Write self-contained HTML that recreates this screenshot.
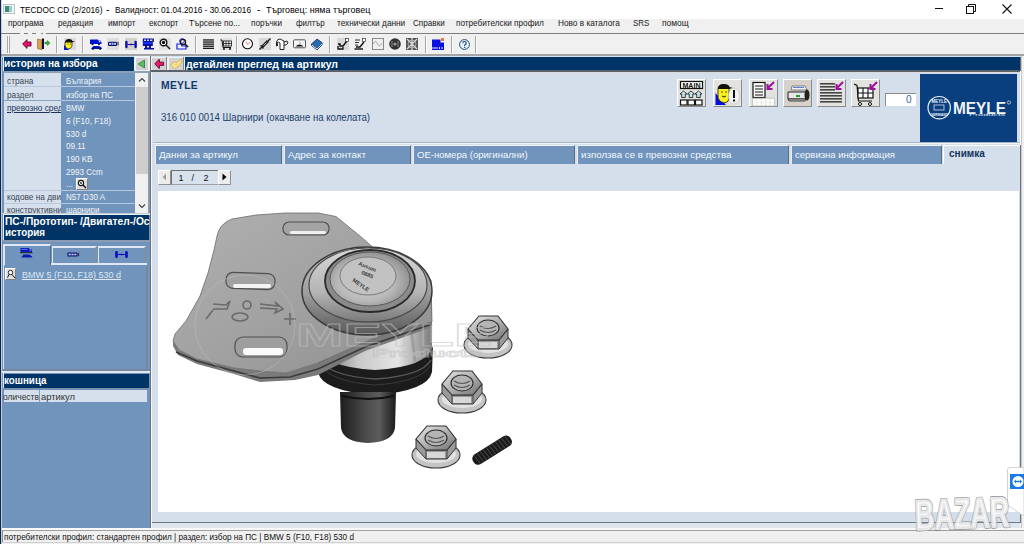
<!DOCTYPE html>
<html><head><meta charset="utf-8"><style>
html,body{margin:0;padding:0;width:1024px;height:544px;overflow:hidden;background:#f0f0f0;}
body{position:relative;font-family:"Liberation Sans", sans-serif;}
.a{position:absolute;}
.t{position:absolute;white-space:pre;transform-origin:0 0;}
</style></head><body>
<div class="a" style="left:0px;top:0px;width:1024px;height:19px;background:#fff"></div><div class="a" style="left:0px;top:19px;width:1024px;height:14px;background:#f0f0f0"></div><div class="a" style="left:0px;top:32.5px;width:20px;height:1.5px;background:#808080"></div><div class="a" style="left:24px;top:32.5px;width:4px;height:1.5px;background:#808080"></div><div class="a" style="left:32px;top:32.5px;width:4px;height:1.5px;background:#808080"></div><div class="a" style="left:41px;top:32.5px;width:2px;height:1.5px;background:#808080"></div><div class="a" style="left:46px;top:32.5px;width:978px;height:1.5px;background:#808080"></div><div class="a" style="left:0px;top:34px;width:1024px;height:20px;background:#f0f0f0"></div><div class="a" style="left:0px;top:54px;width:1024px;height:1.5px;background:#a4a4a4"></div><div class="a" style="left:0px;top:55.5px;width:1024px;height:1.5px;background:#d4e6f4"></div><div class="a" style="left:0px;top:0px;width:1px;height:544px;background:#0a2550"></div><div class="a" style="left:1px;top:0px;width:1px;height:544px;background:#7a8aa8;opacity:0.35"></div><div class="a" style="left:935px;top:8px;width:8px;height:1px;background:#111"></div><div class="a" style="left:2px;top:56px;width:148px;height:472px;background:#7094bc"></div><div class="a" style="left:2px;top:56px;width:148px;height:1px;background:#c8d8e8"></div><div class="a" style="left:3px;top:57px;width:1px;height:14px;background:#e8eef4"></div><div class="a" style="left:4px;top:57px;width:130px;height:14px;background:#003366"></div><div class="a" style="left:3px;top:71px;width:147px;height:2px;background:#8ca0b8"></div><div class="a" style="left:134px;top:56px;width:16px;height:15px;background:#eef2f6"></div><div class="a" style="left:136px;top:58px;width:12px;height:12px;background:#d2d2d2"></div><div class="a" style="left:150px;top:56px;width:1px;height:472px;background:#707070"></div><div class="a" style="left:151px;top:57px;width:873px;height:13px;background:#eef0f2"></div><div class="a" style="left:151px;top:70px;width:869px;height:1.5px;background:#5a626c"></div><div class="a" style="left:151px;top:71.5px;width:869px;height:1.5px;background:#d8dce0"></div><div class="a" style="left:151px;top:72px;width:1px;height:456px;background:#f4f6f8"></div><div class="a" style="left:152px;top:58px;width:14px;height:12px;background:#d2d2d2"></div><div class="a" style="left:166px;top:57px;width:1px;height:14px;background:#8a8a8a"></div><div class="a" style="left:169px;top:58px;width:14px;height:12px;background:#d2d2d2"></div><div class="a" style="left:183px;top:57px;width:1px;height:14px;background:#8a8a8a"></div><div class="a" style="left:185px;top:57px;width:835px;height:13px;background:#003366"></div><div class="a" style="left:152px;top:73px;width:868px;height:449px;background:#d4dfeb"></div><div class="a" style="left:1017px;top:72px;width:3px;height:73px;background:#d4dfeb"></div><div class="a" style="left:1020px;top:71px;width:1px;height:74px;background:#fafafa"></div><div class="a" style="left:1021px;top:56px;width:1px;height:472px;background:#c8c8c8"></div><div class="a" style="left:1022px;top:56px;width:2px;height:472px;background:#f0f0f0"></div><div class="a" style="left:1020px;top:145px;width:1px;height:378px;background:#6c7480"></div><div class="a" style="left:1020px;top:57px;width:1px;height:14px;background:#6a6a6a"></div><div class="a" style="left:153px;top:142px;width:867px;height:1px;background:#a8b4c0"></div><div class="a" style="left:153px;top:143px;width:867px;height:1px;background:#f0f4f8"></div><div class="a" style="left:920px;top:74px;width:97px;height:68px;background:#0a3f7f"></div><div class="a" style="left:677px;top:79px;width:29px;height:28px;background:#e2e2de;border-top:1px solid #fff;border-left:1px solid #fff;border-right:1px solid #8c8c8c;border-bottom:1px solid #8c8c8c;box-sizing:border-box"></div><div class="a" style="left:713px;top:79px;width:29px;height:28px;background:#e2e2de;border-top:1px solid #fff;border-left:1px solid #fff;border-right:1px solid #8c8c8c;border-bottom:1px solid #8c8c8c;box-sizing:border-box"></div><div class="a" style="left:749px;top:79px;width:29px;height:28px;background:#e2e2de;border-top:1px solid #fff;border-left:1px solid #fff;border-right:1px solid #8c8c8c;border-bottom:1px solid #8c8c8c;box-sizing:border-box"></div><div class="a" style="left:783px;top:79px;width:29px;height:28px;background:#d6d2ca;border-top:1px solid #fff;border-left:1px solid #fff;border-right:1px solid #8c8c8c;border-bottom:1px solid #8c8c8c;box-sizing:border-box"></div><div class="a" style="left:817px;top:79px;width:29px;height:28px;background:#e2e2de;border-top:1px solid #fff;border-left:1px solid #fff;border-right:1px solid #8c8c8c;border-bottom:1px solid #8c8c8c;box-sizing:border-box"></div><div class="a" style="left:851px;top:79px;width:29px;height:28px;background:#e2e2de;border-top:1px solid #fff;border-left:1px solid #fff;border-right:1px solid #8c8c8c;border-bottom:1px solid #8c8c8c;box-sizing:border-box"></div><div class="a" style="left:885px;top:93px;width:31px;height:13px;background:#fff;border-top:1px solid #8c8c8c;border-left:1px solid #8c8c8c;box-sizing:border-box"></div><div class="a" style="left:155px;top:145px;width:127px;height:19px;background:#7094bc;border-top:1.5px solid #f0f4f8;border-left:1px solid #e8eef4;border-right:1px solid #5c6c80;box-sizing:border-box"></div><div class="a" style="left:284px;top:145px;width:127px;height:19px;background:#7094bc;border-top:1.5px solid #f0f4f8;border-left:1px solid #e8eef4;border-right:1px solid #5c6c80;box-sizing:border-box"></div><div class="a" style="left:413px;top:145px;width:162px;height:19px;background:#7094bc;border-top:1.5px solid #f0f4f8;border-left:1px solid #e8eef4;border-right:1px solid #5c6c80;box-sizing:border-box"></div><div class="a" style="left:577px;top:145px;width:212px;height:19px;background:#7094bc;border-top:1.5px solid #f0f4f8;border-left:1px solid #e8eef4;border-right:1px solid #5c6c80;box-sizing:border-box"></div><div class="a" style="left:791px;top:145px;width:151px;height:19px;background:#7094bc;border-top:1.5px solid #f0f4f8;border-left:1px solid #e8eef4;border-right:1px solid #5c6c80;box-sizing:border-box"></div><div class="a" style="left:943px;top:145px;width:77px;height:19px;background:#d4dfeb;border-top:1px solid #fff;border-left:1px solid #fff;box-sizing:border-box"></div><div class="a" style="left:158px;top:170px;width:13px;height:15px;background:#ececec;border-top:1px solid #fff;border-left:1px solid #fff;border-right:1px solid #909090;border-bottom:1px solid #909090;box-sizing:border-box"></div><div class="a" style="left:171px;top:170px;width:47px;height:15px;background:#d8e2ec;border-top:1px solid #707070;border-left:1px solid #707070;border-bottom:1px solid #a0a0a0;box-sizing:border-box"></div><div class="a" style="left:218px;top:170px;width:13px;height:15px;background:#ececec;border-top:1px solid #fff;border-left:1px solid #fff;border-right:1px solid #909090;border-bottom:1px solid #909090;box-sizing:border-box"></div><div class="a" style="left:158px;top:191px;width:861px;height:321px;background:#fff"></div><div class="a" style="left:152px;top:522px;width:868px;height:1px;background:#707a86"></div><div class="a" style="left:152px;top:523px;width:868px;height:5px;background:#e0e6ee"></div><div class="a" style="left:2px;top:528px;width:1022px;height:2px;background:#f8f8f8"></div><div class="a" style="left:2px;top:530px;width:1022px;height:1px;background:#a0a0a0"></div><div class="a" style="left:2px;top:531px;width:1022px;height:13px;background:#f0f0f0"></div><div class="a" style="left:2px;top:531px;width:1px;height:11px;background:#8a8a8a"></div><div class="a" style="left:2px;top:542px;width:1022px;height:1px;background:#d0d0d0"></div><div class="a" style="left:4px;top:73px;width:57px;height:13px;background:#d5e0ec"></div><div class="a" style="left:62px;top:73px;width:73px;height:13px;background:#7094bc"></div><div class="a" style="left:4px;top:87px;width:57px;height:13px;background:#d5e0ec"></div><div class="a" style="left:62px;top:87px;width:73px;height:13px;background:#7094bc"></div><div class="a" style="left:4px;top:101px;width:57px;height:89px;background:#d5e0ec"></div><div class="a" style="left:62px;top:101px;width:73px;height:89px;background:#7094bc"></div><div class="a" style="left:4px;top:191px;width:57px;height:12px;background:#d5e0ec"></div><div class="a" style="left:62px;top:191px;width:73px;height:12px;background:#7094bc"></div><div class="a" style="left:4px;top:204px;width:57px;height:9px;background:#d5e0ec"></div><div class="a" style="left:62px;top:204px;width:73px;height:9px;background:#7094bc"></div><div class="a" style="left:4px;top:86px;width:131px;height:1px;background:#b8c8dc"></div><div class="a" style="left:4px;top:100px;width:131px;height:1px;background:#b8c8dc"></div><div class="a" style="left:4px;top:190px;width:131px;height:1px;background:#b8c8dc"></div><div class="a" style="left:4px;top:203px;width:131px;height:1px;background:#b8c8dc"></div><div class="a" style="left:4px;top:100px;width:57px;height:1px;background:#8ca4c0"></div><div class="a" style="left:76px;top:178px;width:12px;height:12px;background:#dcdcdc;border-top:1px solid #fff;border-left:1px solid #fff;border-right:1px solid #808080;border-bottom:1px solid #808080;box-sizing:border-box"></div><div class="a" style="left:135px;top:73px;width:1px;height:140px;background:#f0f0f0"></div><div class="a" style="left:136px;top:73px;width:12px;height:140px;background:#f0f0f0"></div><div class="a" style="left:136px;top:87px;width:12px;height:87px;background:#cdcdcd"></div><div class="a" style="left:148px;top:73px;width:2px;height:141px;background:#8a9ab0"></div><div class="a" style="left:2px;top:213px;width:148px;height:1px;background:#c0ccd8"></div><div class="a" style="left:3px;top:214px;width:147px;height:1px;background:#e8eef4"></div><div class="a" style="left:4px;top:215px;width:145px;height:25px;background:#003366"></div><div class="a" style="left:3px;top:215px;width:1px;height:25px;background:#e8eef4"></div><div class="a" style="left:3px;top:240px;width:147px;height:2px;background:#8a9ab0"></div><div class="a" style="left:3px;top:244px;width:48px;height:21px;background:#7094bc;border-top:2px solid #dfe8f2;border-left:2px solid #dfe8f2;border-right:1px solid #5a6a80;box-sizing:border-box"></div><div class="a" style="left:52px;top:246px;width:45px;height:18px;background:#7094bc;border-top:2px solid #dfe8f2;border-left:1px solid #dfe8f2;border-right:2px solid #8090a4;box-sizing:border-box"></div><div class="a" style="left:98px;top:246px;width:48px;height:18px;background:#7094bc;border-top:2px solid #dfe8f2;border-left:1px solid #dfe8f2;border-right:2px solid #8090a4;box-sizing:border-box"></div><div class="a" style="left:51px;top:263px;width:96px;height:2px;background:#dfe8f2"></div><div class="a" style="left:3px;top:265px;width:1px;height:105px;background:#dfe8f2"></div><div class="a" style="left:146px;top:265px;width:2px;height:105px;background:#7888a0"></div><div class="a" style="left:3px;top:369px;width:145px;height:2px;background:#7888a0"></div><div class="a" style="left:5px;top:268px;width:11px;height:12px;background:#e0e0e0;border-top:1px solid #fff;border-left:1px solid #fff;border-right:1px solid #808080;border-bottom:1px solid #808080;box-sizing:border-box"></div><div class="a" style="left:2px;top:371px;width:148px;height:2px;background:#dfe8f2"></div><div class="a" style="left:3px;top:373px;width:1px;height:15px;background:#e8eef4"></div><div class="a" style="left:4px;top:374px;width:145px;height:14px;background:#003366"></div><div class="a" style="left:3px;top:388px;width:147px;height:1px;background:#8090a4"></div><div class="a" style="left:4px;top:390px;width:35px;height:12px;background:#d5e0ec"></div><div class="a" style="left:40px;top:390px;width:107px;height:12px;background:#d5e0ec"></div><div class="a" style="left:39px;top:390px;width:1px;height:12px;background:#8c9cb0"></div><div class="a" style="left:7px;top:36px;width:1px;height:17px;background:#a8a8a8"></div><div class="a" style="left:8px;top:36px;width:1px;height:17px;background:#fafafa"></div><div class="a" style="left:9px;top:36px;width:1px;height:17px;background:#a8a8a8"></div><div class="a" style="left:56px;top:36px;width:1px;height:17px;background:#a6a6a6"></div><div class="a" style="left:57px;top:36px;width:1px;height:17px;background:#fcfcfc"></div><div class="a" style="left:82px;top:36px;width:1px;height:17px;background:#a6a6a6"></div><div class="a" style="left:83px;top:36px;width:1px;height:17px;background:#fcfcfc"></div><div class="a" style="left:195px;top:36px;width:1px;height:17px;background:#a6a6a6"></div><div class="a" style="left:196px;top:36px;width:1px;height:17px;background:#fcfcfc"></div><div class="a" style="left:236px;top:36px;width:1px;height:17px;background:#a6a6a6"></div><div class="a" style="left:237px;top:36px;width:1px;height:17px;background:#fcfcfc"></div><div class="a" style="left:329px;top:36px;width:1px;height:17px;background:#a6a6a6"></div><div class="a" style="left:330px;top:36px;width:1px;height:17px;background:#fcfcfc"></div><div class="a" style="left:425px;top:36px;width:1px;height:17px;background:#a6a6a6"></div><div class="a" style="left:426px;top:36px;width:1px;height:17px;background:#fcfcfc"></div><div class="a" style="left:451px;top:36px;width:1px;height:17px;background:#a6a6a6"></div><div class="a" style="left:452px;top:36px;width:1px;height:17px;background:#fcfcfc"></div><div class="a" style="left:475px;top:36px;width:1px;height:17px;background:#a6a6a6"></div><div class="a" style="left:476px;top:36px;width:1px;height:17px;background:#fcfcfc"></div><div class="a" style="left:64px;top:38px;width:12px;height:12px;background:#dcdcdc"></div><div class="a" style="left:107px;top:38px;width:12px;height:12px;background:#dedede"></div><div class="a" style="left:125px;top:38px;width:12px;height:12px;background:#d6d2ca"></div><div class="a" style="left:159px;top:38px;width:12px;height:12px;background:#e0e0e0"></div><div class="a" style="left:220px;top:38px;width:12px;height:12px;background:#e0e0e0"></div><div class="a" style="left:259px;top:38px;width:12px;height:12px;background:#d8d8d8"></div><div class="a" style="left:337px;top:38px;width:12px;height:12px;background:#d8d8d8"></div>
<svg class="a" style="left:3px;top:4px" width="12" height="10" viewBox="0 0 12 10"><rect x="0.5" y="0.5" width="11" height="9" fill="#f4f4f4" stroke="#b8c4c8"/><rect x="2" y="2" width="4" height="6" fill="#3a8a78"/><rect x="6" y="2" width="3" height="6" fill="#9cc"/></svg><svg class="a" style="left:966px;top:4px" width="11" height="10" viewBox="0 0 11 10"><rect x="0.5" y="2.5" width="7" height="7" fill="none" stroke="#111"/><path d="M2.5 2.5V0.5H9.5V7.5H7.5" fill="none" stroke="#111"/></svg><svg class="a" style="left:1002px;top:4px" width="10" height="10" viewBox="0 0 10 10"><path d="M0.5 0.5L9.5 9.5M9.5 0.5L0.5 9.5" stroke="#111" stroke-width="1.1"/></svg><svg class="a" style="left:137px;top:59px" width="10" height="10" viewBox="0 0 10 10"><path d="M7.5 1L1.2 5L7.5 9Z" fill="#5cc060" stroke="#2a7a3a" stroke-width="0.8" stroke-linejoin="round"/></svg><svg class="a" style="left:154px;top:58px" width="11" height="12" viewBox="0 0 11 12"><path d="M0.8 5.8 L5.2 1.2 L5.6 4.2 L9.6 4.2 L9.6 7.4 L5.6 7.4 L5.2 10.6 Z" fill="#ee1870" stroke="#5a0628" stroke-width="0.9" stroke-linejoin="round"/></svg><svg class="a" style="left:170px;top:58px" width="13" height="12" viewBox="0 0 13 12"><path d="M0.8 6.5 L4 4 L7.4 4.2 L10 2 L11.8 0.8 L11.6 4 L9.5 7.5 L6.5 10 L4.7 10.9 L2.8 9 Z" fill="#f8e48a" stroke="#c8a850" stroke-width="0.7" stroke-linejoin="round"/><path d="M4.5 6.5 L7.5 6 M5.5 8.5 L8 7.8" stroke="#e0c060" stroke-width="0.6"/></svg><svg class="a" style="left:925px;top:93px" width="90" height="30" viewBox="0 0 90 30"><circle cx="14.2" cy="14.7" r="11.2" fill="none" stroke="#e8eef6" stroke-width="1.2"/><rect x="9" y="12" width="10" height="5" fill="none" stroke="#dde" stroke-width="0.8"/><text x="14.2" y="9.5" font-size="4.5" font-weight="700" fill="#e8eef6" text-anchor="middle" font-family="Liberation Sans">MEYLE</text><text x="14.2" y="23" font-size="3.5" font-weight="700" fill="#e8eef6" text-anchor="middle" font-family="Liberation Sans">GERMANY</text><text x="28" y="21" font-size="17" font-weight="700" fill="#f0f4fa" font-family="Liberation Sans" textLength="53" lengthAdjust="spacingAndGlyphs">MEYLE</text><text x="44" y="23" font-size="4" fill="#e0e8f0" font-family="Liberation Sans" textLength="36" lengthAdjust="spacingAndGlyphs">Products</text><circle cx="84" cy="9.5" r="1.6" fill="none" stroke="#fff" stroke-width="0.6"/></svg><svg class="a" style="left:161px;top:172px" width="7" height="10" viewBox="0 0 7 10"><path d="M5 1.5L1.5 5L5 8.5Z" fill="#a0a0a0"/></svg><svg class="a" style="left:221px;top:172px" width="7" height="10" viewBox="0 0 7 10"><path d="M1.5 1.5L5.5 5L1.5 8.5Z" fill="#000"/></svg><svg class="a" style="left:77px;top:179px" width="10" height="10" viewBox="0 0 10 10"><circle cx="4" cy="4" r="2.6" fill="#fff" stroke="#111" stroke-width="1.1"/><path d="M6 6L9 9" stroke="#111" stroke-width="1.4"/><path d="M3 4H5M4 3V5" stroke="#111" stroke-width="0.8"/></svg><svg class="a" style="left:137px;top:76px" width="10" height="8" viewBox="0 0 10 8"><path d="M2 5.5L5 2.5L8 5.5" fill="none" stroke="#404040" stroke-width="1.1"/></svg><svg class="a" style="left:137px;top:202px" width="10" height="8" viewBox="0 0 10 8"><path d="M2 2.5L5 5.5L8 2.5" fill="none" stroke="#404040" stroke-width="1.1"/></svg><svg class="a" style="left:20px;top:248px" width="13" height="10" viewBox="0 0 13 10"><rect x="0.5" y="0" width="8.5" height="4" fill="#0a18c0"/><rect x="1.5" y="0.8" width="6" height="1.2" fill="#4a6ae0"/><path d="M9 1 L11 1 L12 2.8 L12 4 L9 4Z" fill="#0a18c0"/><rect x="9.6" y="1.6" width="1.2" height="1" fill="#dde"/><rect x="0" y="4.3" width="12.5" height="0.9" fill="#111"/><path d="M2 8.5 L3.5 6.5 L9 6.5 L11.5 8 L12.5 9.5 L1 9.5Z" fill="#0a18b0"/></svg><svg class="a" style="left:67px;top:252px" width="13" height="6" viewBox="0 0 13 6"><rect x="0.5" y="0.5" width="10" height="4" rx="0.6" fill="#0a1070"/><rect x="1.6" y="1.6" width="2.2" height="1.8" fill="#b8c8f0"/><rect x="4.4" y="1.6" width="2.2" height="1.8" fill="#b8c8f0"/><rect x="7.2" y="1.6" width="2.2" height="1.8" fill="#b8c8f0"/><rect x="11.3" y="0.8" width="0.8" height="3.4" fill="#111"/></svg><svg class="a" style="left:115px;top:251px" width="13" height="8" viewBox="0 0 13 8"><rect x="0.2" y="0" width="2.6" height="7" rx="1.2" fill="#0a10c0"/><rect x="10.2" y="0" width="2.6" height="7" rx="1.2" fill="#0a10c0"/><rect x="2.5" y="3" width="8" height="1" fill="#0a10c0"/><circle cx="6.5" cy="3.5" r="1" fill="#0a10c0"/></svg><svg class="a" style="left:6px;top:269px" width="10" height="10" viewBox="0 0 10 10"><circle cx="4.5" cy="3.5" r="2.2" fill="#fff" stroke="#111" stroke-width="0.9"/><path d="M1.5 8.5 L3 5.5 M6 5.5 L9 9" stroke="#111" stroke-width="1"/></svg><svg class="a" style="left:158px;top:191px" width="861" height="321" viewBox="158 191 861 321">
<defs>
<linearGradient id="plate" x1="0" y1="0" x2="1" y2="1">
<stop offset="0" stop-color="#b0b0b0"/><stop offset="0.5" stop-color="#a2a2a2"/><stop offset="1" stop-color="#8e8e8e"/></linearGradient>
<radialGradient id="dome" cx="0.45" cy="0.55" r="0.6">
<stop offset="0" stop-color="#d6d6d6"/><stop offset="0.6" stop-color="#b8b8b8"/><stop offset="1" stop-color="#8a8a8a"/></radialGradient>
<linearGradient id="housing" x1="0" y1="0" x2="1" y2="0">
<stop offset="0" stop-color="#6a6a6a"/><stop offset="0.35" stop-color="#c8c8c8"/><stop offset="0.7" stop-color="#e4e4e4"/><stop offset="1" stop-color="#7a7a7a"/></linearGradient>
<linearGradient id="stud" x1="0" y1="0" x2="1" y2="0">
<stop offset="0" stop-color="#1c1c1c"/><stop offset="0.45" stop-color="#4a4a4a"/><stop offset="0.7" stop-color="#5c5c5c"/><stop offset="1" stop-color="#1a1a1a"/></linearGradient>
<linearGradient id="rimg" x1="0" y1="0" x2="0" y2="1"><stop offset="0" stop-color="#c8c8c8"/><stop offset="0.55" stop-color="#9a9a9a"/><stop offset="1" stop-color="#5a5a5a"/></linearGradient>
<linearGradient id="ring2" x1="0" y1="0" x2="0" y2="1"><stop offset="0" stop-color="#d8d8d8"/><stop offset="0.6" stop-color="#b4b4b4"/><stop offset="1" stop-color="#7a7a7a"/></linearGradient>
<linearGradient id="nutg" x1="0" y1="0" x2="1" y2="1">
<stop offset="0" stop-color="#e8e8e8"/><stop offset="0.5" stop-color="#b0b0b0"/><stop offset="1" stop-color="#707070"/></linearGradient>
</defs>
<g>
<!-- housing body -->
<path d="M318 300 L432 292 L432 352 Q428 368 375 371 Q322 369 318 352Z" fill="url(#housing)"/>
<path d="M330 330 L340 365 M410 320 L415 362" stroke="#8a8a8a" stroke-width="3" opacity="0.5"/>
<!-- rubber ring + boot -->
<path d="M317 346 Q322 367 375 370 Q428 367 433 346 L432 372 Q428 391 375 395 Q322 391 318 372Z" fill="#1c1c1c"/>
<path d="M320 360 Q330 376 375 379 Q422 376 431 360" fill="none" stroke="#5a5a5a" stroke-width="1.4"/>
<path d="M322 366 Q332 382 375 385 Q420 382 430 366" fill="none" stroke="#3a3a3a" stroke-width="1"/>
<!-- stud -->
<path d="M340 392 L396 392 L395 428 Q393 442 368 443 Q343 442 341 428Z" fill="url(#stud)"/>
<path d="M342 396 Q368 402 394 396" stroke="#111" stroke-width="2" fill="none"/>
<!-- plate thickness -->
<path d="M173 341 L173 346 L178 355 L197 364 L234 374 L260 382 L295 380 L318 375 L365 351 L432 327 L432 322 L387 333 L365 342 L318 363 L286 373 L260 371 L234 368 L197 359 L179 350Z" fill="#7a7a7a"/>
<path d="M176 352 L197 361 L234 371 L260 378 L290 377 L318 369 L365 347 L432 324" fill="none" stroke="#3a3a3a" stroke-width="1.6"/>
<!-- plate -->
<path d="M217 236 Q219 224 232 219 L256 215 L285 213 L318 213 L336 216.5 L360 236 L385 258 L431 280 L432 322 L387 333 L365 342 L318 363 L286 373 L260 371 L234 368 L197 359 L179 350 L173 341 L175 334 L186 321 L200 296 L208 273 L214 250Z" fill="url(#plate)" stroke="#6a6a6a" stroke-width="0.8"/>
<!-- slots -->
<rect x="283" y="222" width="46" height="13" rx="6" fill="#a4a4a4" stroke="#505050" stroke-width="1.2"/>
<rect x="290" y="231" width="36" height="3" rx="1.5" fill="#f0f0f0"/>
<rect x="226" y="273" width="49" height="16" rx="7" fill="#a2a2a2" stroke="#505050" stroke-width="1.2" transform="rotate(2 250 281)"/>
<rect x="233" y="284" width="38" height="4" rx="2" fill="#f4f4f4"/>
<rect x="235" y="337" width="52" height="20" rx="8" fill="#9e9e9e" stroke="#505050" stroke-width="1.2"/>
<rect x="243" y="348" width="40" height="7" rx="3" fill="#fafafa"/>
<!-- markings -->
<g fill="none" stroke="#6a6a6a" stroke-width="1.6">
<path d="M213 310 L206 319"/><path d="M213 304 L226 305 L230 301 L227 309 L213 309"/>
<circle cx="247" cy="305" r="4"/><ellipse cx="240" cy="317" rx="8" ry="4"/>
<path d="M260 304 L278 306 L275 302 L283 309 L275 313 L277 309 L260 308"/>
<path d="M290 313 L290 325 M284 319 L296 319"/>
</g>
<!-- outer rim -->
<ellipse cx="367" cy="291" rx="65" ry="44" fill="url(#rimg)" stroke="#3a3a3a" stroke-width="1.5"/>
<ellipse cx="368" cy="285" rx="59" ry="37" fill="url(#ring2)" stroke="#4a4a4a" stroke-width="1.2"/>
<ellipse cx="370" cy="281" rx="45" ry="31" fill="#8a8a8a" stroke="#2a2a2a" stroke-width="1.8"/>
<ellipse cx="370" cy="279" rx="40" ry="27" fill="url(#dome)" stroke="#5a5a5a" stroke-width="1"/>
<ellipse cx="368" cy="276" rx="28" ry="19" fill="#c2c2c2" stroke="#7a7a7a" stroke-width="1"/>
<g fill="#3a3a3a" font-family="Liberation Sans" font-size="5.5" font-weight="700">
<text x="352" y="281" transform="rotate(35 352 281)">MEYLE</text>
<text x="358" y="265" transform="rotate(22 358 265)">Ausum</text>
<text x="361" y="274" transform="rotate(22 361 274)">0885</text>
</g>
</g>
<ellipse cx="488" cy="345" rx="24" ry="13" fill="#c4c4c4" stroke="#3a3a3a" stroke-width="1.1"/>
<ellipse cx="488" cy="344" rx="20" ry="9" fill="#e2e2e2"/>
<polygon points="468,329 478,340 499,340 508,329 508,338 499,349 478,349 468,338" fill="#9a9a9a" stroke="#333" stroke-width="1"/>
<path d="M478 340 L478 349 M499 340 L499 349" stroke="#444" stroke-width="1"/>
<path d="M479 342 L497 342 L497 348 L479 348Z" fill="#d8d8d8"/>
<polygon points="479,316 498,316 508,329 499,340 478,340 468,329" fill="url(#nutg)" stroke="#333" stroke-width="1.1"/>
<ellipse cx="488" cy="328" rx="11" ry="8" fill="#b4b4b4" stroke="#2a2a2a" stroke-width="1.1"/>
<path d="M480 326 Q488 331 496 326 M480 330 Q488 335 496 330" stroke="#555" stroke-width="1.1" fill="none"/><ellipse cx="462" cy="400" rx="24" ry="13" fill="#c4c4c4" stroke="#3a3a3a" stroke-width="1.1"/>
<ellipse cx="462" cy="399" rx="20" ry="9" fill="#e2e2e2"/>
<polygon points="442,384 452,395 473,395 482,384 482,393 473,404 452,404 442,393" fill="#9a9a9a" stroke="#333" stroke-width="1"/>
<path d="M452 395 L452 404 M473 395 L473 404" stroke="#444" stroke-width="1"/>
<path d="M453 397 L471 397 L471 403 L453 403Z" fill="#d8d8d8"/>
<polygon points="453,371 472,371 482,384 473,395 452,395 442,384" fill="url(#nutg)" stroke="#333" stroke-width="1.1"/>
<ellipse cx="462" cy="383" rx="11" ry="8" fill="#b4b4b4" stroke="#2a2a2a" stroke-width="1.1"/>
<path d="M454 381 Q462 386 470 381 M454 385 Q462 390 470 385" stroke="#555" stroke-width="1.1" fill="none"/><ellipse cx="436" cy="455" rx="24" ry="13" fill="#c4c4c4" stroke="#3a3a3a" stroke-width="1.1"/>
<ellipse cx="436" cy="454" rx="20" ry="9" fill="#e2e2e2"/>
<polygon points="416,439 426,450 447,450 456,439 456,448 447,459 426,459 416,448" fill="#9a9a9a" stroke="#333" stroke-width="1"/>
<path d="M426 450 L426 459 M447 450 L447 459" stroke="#444" stroke-width="1"/>
<path d="M427 452 L445 452 L445 458 L427 458Z" fill="#d8d8d8"/>
<polygon points="427,426 446,426 456,439 447,450 426,450 416,439" fill="url(#nutg)" stroke="#333" stroke-width="1.1"/>
<ellipse cx="436" cy="438" rx="11" ry="8" fill="#b4b4b4" stroke="#2a2a2a" stroke-width="1.1"/>
<path d="M428 436 Q436 441 444 436 M428 440 Q436 445 444 440" stroke="#555" stroke-width="1.1" fill="none"/><g transform="rotate(-32 492 450)"><rect x="470" y="444.5" width="44" height="11.5" rx="5" fill="#1a1a1a"/><g stroke="#444" stroke-width="1"><path d="M474.0 445 L475.0 455.5"/><path d="M477.6 445 L478.6 455.5"/><path d="M481.2 445 L482.2 455.5"/><path d="M484.8 445 L485.8 455.5"/><path d="M488.4 445 L489.4 455.5"/><path d="M492.0 445 L493.0 455.5"/><path d="M495.6 445 L496.6 455.5"/><path d="M499.2 445 L500.2 455.5"/><path d="M502.8 445 L503.8 455.5"/><path d="M506.4 445 L507.4 455.5"/><path d="M510.0 445 L511.0 455.5"/></g></g><g fill="none" stroke="#c0c0c0" stroke-width="0.9" opacity="0.55" font-family="Liberation Sans" font-weight="700"><text x="296" y="346" font-size="32" textLength="196" lengthAdjust="spacingAndGlyphs">MEYLE</text><text x="372" y="357" font-size="10" textLength="110" lengthAdjust="spacingAndGlyphs">Products</text><circle cx="245" cy="325" r="50"/></g></svg><svg class="a" style="left:22px;top:39px" width="10" height="10" viewBox="0 0 10 10"><path d="M0.6 5 L5 0.6 L5 3 L9 3 L9 7 L5 7 L5 9.4 Z" fill="#e8106a" stroke="#5a0628" stroke-width="0.9"/></svg><svg class="a" style="left:37px;top:38px" width="14" height="12" viewBox="0 0 14 12"><path d="M0.5 1 L5 2 L5 12 L0.5 10.5Z" fill="#d8a050" stroke="#8a6020" stroke-width="0.6"/><rect x="5" y="0.5" width="2" height="10.5" fill="#0a0a40"/><path d="M13 5 L10.5 2.5 L10.5 4 L8 4 L8 6 L10.5 6 L10.5 7.5Z" fill="#30b030" stroke="#208020" stroke-width="0.5"/></svg><svg class="a" style="left:64px;top:38px" width="12" height="12" viewBox="0 0 12 12"><path d="M0 7 L5 12 L0 12Z" fill="#0010e0"/><path d="M1 5 Q1 2 5 2 Q8 2 8 5 L8 8 Q7 11 4 11 Q1 10 1 7Z" fill="#f8f020" stroke="#111" stroke-width="0.7"/><path d="M1 4 Q1.5 1 5 1 Q8 1 8.5 3 L11 3.5 L8 4.5 L1 4.5Z" fill="#111"/><circle cx="4" cy="6" r="0.5" fill="#111"/><circle cx="6.5" cy="6" r="0.5" fill="#111"/></svg><svg class="a" style="left:90px;top:39px" width="13" height="11" viewBox="0 0 13 11"><rect x="0" y="0.5" width="8" height="4.5" fill="#0010d0"/><path d="M8 1.5 L10.5 1.5 L11.5 3.5 L11.5 5 L8 5Z" fill="#0010d0"/><rect x="9" y="2" width="1.5" height="1.2" fill="#fff"/><circle cx="2.5" cy="5.2" r="1" fill="#0a0a40"/><circle cx="9" cy="5.2" r="1" fill="#0a0a40"/><path d="M1.5 9 L3.5 7 L9 7 L11.5 8.5 L12 10 L1 10Z" fill="#0010b0"/><circle cx="3" cy="10" r="0.9" fill="#0a0a40"/><circle cx="10" cy="10" r="0.9" fill="#0a0a40"/></svg><svg class="a" style="left:107px;top:38px" width="12" height="12" viewBox="0 0 12 12"><rect x="1" y="3.7" width="9" height="4.2" rx="0.8" fill="#0a1070"/><rect x="2" y="4.8" width="2" height="2" fill="#b8c8f0"/><rect x="4.5" y="4.8" width="2" height="2" fill="#b8c8f0"/><rect x="7" y="4.8" width="2" height="2" fill="#b8c8f0"/><rect x="10.6" y="3.8" width="0.9" height="3.6" fill="#111"/></svg><svg class="a" style="left:125px;top:38px" width="12" height="12" viewBox="0 0 12 12"><rect x="0.2" y="2.8" width="2.4" height="7.4" rx="1.1" fill="#0a10b0"/><rect x="9.4" y="2.8" width="2.4" height="7.4" rx="1.1" fill="#0a10b0"/><rect x="2.5" y="6" width="7" height="1" fill="#0a10b0"/><circle cx="6" cy="6.5" r="0.9" fill="#0a10b0"/></svg><svg class="a" style="left:142px;top:38px" width="12" height="12" viewBox="0 0 12 12"><rect x="0.8" y="0.5" width="10" height="7.5" fill="#0a10a0"/><rect x="2" y="1.5" width="2" height="1.5" fill="#c8d8f0"/><rect x="5" y="1.5" width="2" height="1.5" fill="#c8d8f0"/><rect x="8" y="1.5" width="2" height="1.5" fill="#c8d8f0"/><rect x="1" y="4" width="9" height="2" fill="#1030ff"/><rect x="11.2" y="0.5" width="0.8" height="3.5" fill="#111"/><path d="M3 8 L5 8 L5 9.5 L7 9.5 L7 8 L9 8 L9 10 L12 10 L12 11.5 L2 11.5 L2 10 L3 10Z" fill="#0a10a0"/></svg><svg class="a" style="left:159px;top:38px" width="12" height="12" viewBox="0 0 12 12"><circle cx="4.5" cy="4.5" r="3.3" fill="#fff" stroke="#111" stroke-width="1.4"/><circle cx="4.5" cy="4.5" r="1.7" fill="#111"/><path d="M7 7 L11 11" stroke="#222" stroke-width="1.6"/></svg><svg class="a" style="left:176px;top:38px" width="13" height="12" viewBox="0 0 13 12"><circle cx="6" cy="3" r="2.3" fill="#fff" stroke="#1020e0" stroke-width="1"/><path d="M1 11 L1 6 L5 6 L6 8 L10 8 L10 11Z" fill="none" stroke="#1020e0" stroke-width="1.2"/><circle cx="7" cy="4" r="2.6" fill="none" stroke="#111" stroke-width="1.2"/><path d="M9 6 L12 9" stroke="#111" stroke-width="1.6"/></svg><svg class="a" style="left:203px;top:39px" width="11" height="11" viewBox="0 0 11 11"><rect x="0" y="0.3" width="11" height="1.3" fill="#1a1a1a"/><rect x="0" y="2.4" width="11" height="1.3" fill="#1a1a1a"/><rect x="0" y="4.5" width="11" height="1.3" fill="#1a1a1a"/><rect x="0" y="6.6" width="11" height="1.3" fill="#1a1a1a"/><rect x="0" y="8.7" width="11" height="1.3" fill="#1a1a1a"/></svg><svg class="a" style="left:220px;top:38px" width="13" height="12" viewBox="0 0 13 12"><path d="M0.5 2 L2 2 L3 9.5 L11 9.5" fill="none" stroke="#111" stroke-width="1"/><rect x="3.5" y="3" width="8" height="5" fill="#fff" stroke="#111" stroke-width="0.8"/><path d="M6 3V8M8.8 3V8M3.5 5.5H11.5" stroke="#111" stroke-width="0.8"/><circle cx="4" cy="11" r="1" fill="#111"/><circle cx="10" cy="11" r="1" fill="#111"/></svg><svg class="a" style="left:242px;top:38px" width="12" height="12" viewBox="0 0 12 12"><circle cx="5.5" cy="5.8" r="5" fill="#fff" stroke="#111" stroke-width="1.1"/><path d="M5.5 6.5 L3.8 3.5 M5.5 6.5 L8 4.2" stroke="#e06060" stroke-width="0.8"/></svg><svg class="a" style="left:259px;top:38px" width="12" height="12" viewBox="0 0 12 12"><path d="M0.5 11.5 L3 9" stroke="#111" stroke-width="1.2"/><path d="M2 8 L8 2 L10 4 L4 10Z" fill="#222"/><path d="M1.5 7.5 L4.5 10.5" stroke="#222" stroke-width="1.2"/><path d="M9 3 L11.5 0.5" stroke="#111" stroke-width="1.3"/><path d="M4.5 7.5 L7.5 4.5" stroke="#ddd" stroke-width="0.7"/></svg><svg class="a" style="left:276px;top:38px" width="13" height="12" viewBox="0 0 13 12"><path d="M4 1 L8 3 L8 11.5 L4 11.5 L4 5 Q2 3 1 5 L1 8 L0.5 8 L0.5 4 Q1 1 4 1Z" fill="#fff" stroke="#111" stroke-width="0.9"/><path d="M8 4 L11 3 L12 5 L10 7 L8 7" fill="none" stroke="#111" stroke-width="0.9"/><path d="M0.5 5 Q2 6 1 8" fill="#111" stroke="#111" stroke-width="0.9"/></svg><svg class="a" style="left:293px;top:39px" width="13" height="10" viewBox="0 0 13 10"><rect x="0.5" y="0.8" width="12" height="8" rx="1" fill="#f4f4f4" stroke="#555" stroke-width="1"/><path d="M2.5 7.5 Q6.5 3.5 10.5 7.5Z" fill="#111"/><path d="M6.5 2.5 L7.5 5" stroke="#c06060" stroke-width="0.6"/></svg><svg class="a" style="left:311px;top:38px" width="12" height="12" viewBox="0 0 12 12"><path d="M0.5 6 L6 1 L11.5 5 L6 10.5Z" fill="#2a6cb0" stroke="#0a2a60" stroke-width="0.8"/><path d="M0.5 6 L0.5 7.5 L6 12 L11.5 6.5" fill="none" stroke="#0a2a60" stroke-width="0.8"/><path d="M1 7 L6 11 L11 6" stroke="#fff" stroke-width="0.6" fill="none"/></svg><svg class="a" style="left:337px;top:38px" width="12" height="12" viewBox="0 0 12 12"><path d="M1 6 L3 6 L3 8 L6 8 L10 3" fill="none" stroke="#111" stroke-width="1.4"/><path d="M1 8 L1 11 L6 11 L6 9" fill="none" stroke="#111" stroke-width="1.3"/><rect x="8.5" y="0.5" width="3" height="3" fill="#fff" stroke="#111" stroke-width="0.6"/></svg><svg class="a" style="left:354px;top:38px" width="12" height="12" viewBox="0 0 12 12"><path d="M1 2 L6 2 M1 4.5 L5 4.5 M1 7 L4 7" stroke="#333" stroke-width="1"/><path d="M2 9 L6 9 L10 4" fill="none" stroke="#111" stroke-width="1.4"/><path d="M0.5 11 L9 11" stroke="#111" stroke-width="1.4"/><rect x="8.5" y="0.5" width="3" height="3" fill="#fff" stroke="#111" stroke-width="0.6"/></svg><svg class="a" style="left:372px;top:38px" width="12" height="12" viewBox="0 0 12 12"><rect x="0.5" y="0.5" width="11" height="11" fill="#f0f0f0" stroke="#888" stroke-width="1"/><path d="M1.5 6 Q3 1 5 5 Q7 11 10 5" fill="none" stroke="#999" stroke-width="0.8"/></svg><svg class="a" style="left:389px;top:38px" width="12" height="12" viewBox="0 0 12 12"><circle cx="6" cy="6" r="5.8" fill="#333"/><circle cx="6" cy="6" r="1.6" fill="#999"/><path d="M2 4H4M2 6H4M2 8H4M8 4H10M8 6H10M8 8H10" stroke="#ccc" stroke-width="0.6"/></svg><svg class="a" style="left:406px;top:38px" width="12" height="12" viewBox="0 0 12 12"><rect x="0" y="0" width="12" height="12" fill="#555"/><path d="M1 1 L11 11 M11 1 L1 11 M6 0 L6 12" stroke="#ddd" stroke-width="1.2"/><circle cx="6" cy="6" r="4" fill="none" stroke="#bbb" stroke-width="0.8"/></svg><svg class="a" style="left:432px;top:38px" width="12" height="12" viewBox="0 0 12 12"><path d="M0 1.5 L8.5 1.5 L8.5 4.5 L12 4.5 L12 12 L0 12Z" fill="#0a10e0"/><rect x="9" y="0" width="3" height="3" fill="#f07830"/><path d="M1 9 L1 11 M3 9 L3 11 M5 9 L5 11 M7.5 9 L7.5 11 M10 9 L10 11" stroke="#fff" stroke-width="0.9"/></svg><svg class="a" style="left:459px;top:39px" width="12" height="12" viewBox="0 0 12 12"><circle cx="5.5" cy="5.5" r="4.9" fill="#eaf4fc" stroke="#1a4a7a" stroke-width="1"/><path d="M3.8 4.2 Q3.8 2.5 5.5 2.5 Q7.2 2.5 7.2 4.2 Q7.2 5.3 5.7 6 L5.7 7" fill="none" stroke="#1a4a7a" stroke-width="1.2"/><circle cx="5.7" cy="8.4" r="0.7" fill="#1a4a7a"/></svg><svg class="a" style="left:677px;top:79px" width="29" height="28" viewBox="0 0 29 28"><rect x="3.5" y="2.5" width="22" height="7" fill="#fff" stroke="#111" stroke-width="1.2"/><text x="14.5" y="8.6" font-family="Liberation Sans" font-size="6.5" font-weight="700" text-anchor="middle" fill="#111" textLength="18" lengthAdjust="spacingAndGlyphs">MAIN</text><path d="M6.5 12 L10.0 15 L8.3 15 L8.3 18.5 L4.7 18.5 L4.7 15 L3.0 15Z" fill="#c0e8f0" stroke="#111" stroke-width="0.8"/><path d="M14 12 L17.5 15 L15.8 15 L15.8 18.5 L12.2 18.5 L12.2 15 L10.5 15Z" fill="#c0e8f0" stroke="#111" stroke-width="0.8"/><path d="M21.5 12 L25.0 15 L23.3 15 L23.3 18.5 L19.7 18.5 L19.7 15 L18.0 15Z" fill="#c0e8f0" stroke="#111" stroke-width="0.8"/><rect x="3.5" y="21" width="6.5" height="5" fill="#fff" stroke="#111" stroke-width="1.2"/><rect x="11" y="21" width="6.5" height="5" fill="#fff" stroke="#111" stroke-width="1.2"/><rect x="18.5" y="21" width="6.5" height="5" fill="#fff" stroke="#111" stroke-width="1.2"/></svg><svg class="a" style="left:713px;top:79px" width="29" height="28" viewBox="0 0 29 28"><path d="M2.5 14 L13 26 L2.5 26Z" fill="#0010e0"/><path d="M5 10 Q5 6 10.5 6 Q16 6 16 10 L16 20 Q15 24 11 24 Q6 23 5 19Z" fill="#f8f020" stroke="#111" stroke-width="0.8"/><path d="M5 10 Q5 5 10.5 5 Q16 5 16.5 8 L20 9 L16 10Z" fill="#111"/><circle cx="9" cy="13" r="0.7" fill="#111"/><circle cx="13" cy="13" r="0.7" fill="#111"/><path d="M9 17 Q11 19 13 17" stroke="#111" fill="none" stroke-width="0.9"/><ellipse cx="21" cy="17" rx="5.5" ry="8" fill="#f4f4f4" stroke="#bbb" stroke-width="0.6"/><rect x="20" y="11" width="2" height="8" fill="#111"/><rect x="20" y="20.5" width="2" height="2" fill="#111"/></svg><svg class="a" style="left:749px;top:79px" width="29" height="28" viewBox="0 0 29 28"><rect x="4" y="3.5" width="12" height="15" fill="#fff" stroke="#111" stroke-width="1.2"/><path d="M6 7H14M6 10H14M6 13H14M6 16H14" stroke="#111" stroke-width="1"/><rect x="4.0" y="20" width="3.4" height="3.2" fill="#fff"/><rect x="4.0" y="23.5" width="3.4" height="3.2" fill="#fff"/><rect x="8.4" y="20" width="3.4" height="3.2" fill="#fff"/><rect x="8.4" y="23.5" width="3.4" height="3.2" fill="#fff"/><rect x="12.8" y="20" width="3.4" height="3.2" fill="#fff"/><rect x="12.8" y="23.5" width="3.4" height="3.2" fill="#fff"/><rect x="17.2" y="20" width="3.4" height="3.2" fill="#fff"/><rect x="17.2" y="23.5" width="3.4" height="3.2" fill="#fff"/><rect x="21.6" y="20" width="3.4" height="3.2" fill="#fff"/><rect x="21.6" y="23.5" width="3.4" height="3.2" fill="#fff"/><rect x="3.5" y="19" width="22" height="8" fill="none" stroke="#aaa" stroke-width="0.5"/><path d="M25 3 L19 9 M18.5 5 L18.5 10 L23.5 10" stroke="#a010a0" stroke-width="2" fill="none"/></svg><svg class="a" style="left:783px;top:79px" width="29" height="28" viewBox="0 0 29 28"><path d="M9 7 L22 7 L24 11 L8 11Z" fill="#f0f4ff" stroke="#666" stroke-width="0.8"/><path d="M10 8.5 L21 8.5" stroke="#6080d0" stroke-width="1"/><path d="M5 13 L23 13 L23 20 L5 20Z" fill="#e8e8e8" stroke="#222" stroke-width="1"/><rect x="13" y="16" width="4" height="2" fill="#20a020"/><path d="M5 20 L23 20 L22 22 L6 22Z" fill="#bbb" stroke="#222" stroke-width="0.8"/><ellipse cx="24" cy="16" rx="2.5" ry="5.5" fill="#222"/></svg><svg class="a" style="left:817px;top:79px" width="29" height="28" viewBox="0 0 29 28"><rect x="3" y="4.0" width="15" height="1.6" fill="#444"/><rect x="3" y="7.0" width="15" height="1.6" fill="#444"/><rect x="3" y="10.0" width="15" height="1.6" fill="#444"/><rect x="3" y="13.0" width="22" height="1.6" fill="#444"/><rect x="3" y="16.0" width="22" height="1.6" fill="#444"/><rect x="3" y="19.0" width="22" height="1.6" fill="#444"/><rect x="3" y="22.0" width="22" height="1.6" fill="#444"/><path d="M26 3 L20 9 M19.5 5 L19.5 10 L24.5 10" stroke="#a010a0" stroke-width="2" fill="none"/></svg><svg class="a" style="left:851px;top:79px" width="29" height="28" viewBox="0 0 29 28"><path d="M3 5 L6 6.5 L7.5 22 L21 22" fill="none" stroke="#111" stroke-width="1.2"/><rect x="7" y="9" width="15" height="10" fill="#fff" stroke="#111" stroke-width="1.2"/><path d="M12 9V19M17 9V19M7 14H22" stroke="#111" stroke-width="1.1"/><circle cx="9" cy="25" r="1.5" fill="#fff" stroke="#111"/><circle cx="19" cy="25" r="1.5" fill="#fff" stroke="#111"/><path d="M26 3 L20 9 M19.5 5 L19.5 10 L24.5 10" stroke="#a010a0" stroke-width="2" fill="none"/></svg><svg class="a" style="left:1005px;top:467px" width="19" height="50" viewBox="0 0 19 50"><path d="M19 0.5 L5 0.5 Q2.5 0.5 2.5 3 L2.5 38 L17 48 L19 48Z" fill="#fff" stroke="#c8c8c8" stroke-width="0.8"/><rect x="5" y="7" width="14" height="15" fill="#1a7ae8"/><circle cx="13" cy="14.5" r="5.5" fill="#fff"/><path d="M9 14.5 L11 12.5 L11 13.8 L15 13.8 L15 12.5 L17 14.5 L15 16.5 L15 15.2 L11 15.2 L11 16.5Z" fill="#1a7ae8"/></svg><svg class="a" style="left:900px;top:486px" width="124" height="50" viewBox="0 0 124 50"><g transform="rotate(-2 62 25)" font-family="Liberation Sans" font-size="42" font-weight="700"><text x="15" y="42" fill="none" stroke="#6a6a6a" stroke-width="3.4" stroke-linejoin="round" textLength="94" lengthAdjust="spacingAndGlyphs" opacity="0.75">BAZAR</text><text x="15" y="42" fill="#fff" stroke="#fff" stroke-width="2.2" stroke-linejoin="round" textLength="94" lengthAdjust="spacingAndGlyphs" opacity="0.8">BAZAR</text></g></svg>
<div class="t" style="left:19.5px;top:4.87px;font-size:9.6px;line-height:9.6px;font-weight:400;color:#000;transform:scaleX(0.8644);">TECDOC CD (2/2016)</div><div class="t" style="left:106px;top:4.54px;font-size:10px;line-height:10px;font-weight:400;color:#000;">-</div><div class="t" style="left:115px;top:4.87px;font-size:9.6px;line-height:9.6px;font-weight:400;color:#000;transform:scaleX(0.8607);">Валидност: 01.04.2016 - 30.06.2016</div><div class="t" style="left:257px;top:4.54px;font-size:10px;line-height:10px;font-weight:400;color:#000;">-</div><div class="t" style="left:265.5px;top:4.87px;font-size:9.6px;line-height:9.6px;font-weight:400;color:#000;transform:scaleX(0.9289);">Търговец: няма търговец</div><div class="t" style="left:7.5px;top:17.96px;font-size:9.5px;line-height:9.5px;font-weight:400;color:#1a1a1a;transform:scaleX(0.8541);">програма</div><div class="t" style="left:58px;top:17.96px;font-size:9.5px;line-height:9.5px;font-weight:400;color:#1a1a1a;transform:scaleX(0.8488);">редакция</div><div class="t" style="left:107.5px;top:17.96px;font-size:9.5px;line-height:9.5px;font-weight:400;color:#1a1a1a;transform:scaleX(0.8674);">импорт</div><div class="t" style="left:148.75px;top:17.96px;font-size:9.5px;line-height:9.5px;font-weight:400;color:#1a1a1a;transform:scaleX(0.8564);">експорт</div><div class="t" style="left:189px;top:17.96px;font-size:9.5px;line-height:9.5px;font-weight:400;color:#1a1a1a;transform:scaleX(0.8706);">Търсене по...</div><div class="t" style="left:251px;top:17.96px;font-size:9.5px;line-height:9.5px;font-weight:400;color:#1a1a1a;transform:scaleX(0.8596);">поръчки</div><div class="t" style="left:296px;top:17.96px;font-size:9.5px;line-height:9.5px;font-weight:400;color:#1a1a1a;transform:scaleX(0.8394);">филтър</div><div class="t" style="left:336.5px;top:17.96px;font-size:9.5px;line-height:9.5px;font-weight:400;color:#1a1a1a;transform:scaleX(0.8712);">технически данни</div><div class="t" style="left:413px;top:17.96px;font-size:9.5px;line-height:9.5px;font-weight:400;color:#1a1a1a;transform:scaleX(0.8559);">Справки</div><div class="t" style="left:456px;top:17.96px;font-size:9.5px;line-height:9.5px;font-weight:400;color:#1a1a1a;transform:scaleX(0.8623);">потребителски профил</div><div class="t" style="left:557.75px;top:17.96px;font-size:9.5px;line-height:9.5px;font-weight:400;color:#1a1a1a;transform:scaleX(0.8680);">Ново в каталога</div><div class="t" style="left:633.25px;top:17.96px;font-size:9.5px;line-height:9.5px;font-weight:400;color:#1a1a1a;transform:scaleX(0.8313);">SRS</div><div class="t" style="left:661.5px;top:17.96px;font-size:9.5px;line-height:9.5px;font-weight:400;color:#1a1a1a;transform:scaleX(0.8898);">помощ</div><div class="t" style="left:4px;top:58.53px;font-size:10px;line-height:10px;font-weight:700;color:#fff;transform:scaleX(1.0102);">история на избора</div><div class="t" style="left:186px;top:58.61px;font-size:10.5px;line-height:10.5px;font-weight:700;color:#fff;transform:scaleX(0.9964);">детайлен преглед на артикул</div><div class="t" style="left:161px;top:80.11px;font-size:10.5px;line-height:10.5px;font-weight:700;color:#12386a;transform:scaleX(0.9822);letter-spacing:0.3px">MEYLE</div><div class="t" style="left:161px;top:112.53px;font-size:10px;line-height:10px;font-weight:400;color:#1e3e6a;transform:scaleX(0.9621);">316 010 0014 Шарнири (окачване на колелата)</div><div class="t" style="left:906px;top:95.03px;font-size:10px;line-height:10px;font-weight:400;color:#3a6a9a;">0</div><div class="t" style="left:158.5px;top:150.63px;font-size:9.3px;line-height:9.3px;font-weight:400;color:#f4f8fc;transform:scaleX(1.0511);">Данни за артикул</div><div class="t" style="left:287.5px;top:150.63px;font-size:9.3px;line-height:9.3px;font-weight:400;color:#f4f8fc;transform:scaleX(1.0619);">Адрес за контакт</div><div class="t" style="left:416.5px;top:150.63px;font-size:9.3px;line-height:9.3px;font-weight:400;color:#f4f8fc;transform:scaleX(1.0270);">ОЕ-номера (оригинални)</div><div class="t" style="left:580.5px;top:150.63px;font-size:9.3px;line-height:9.3px;font-weight:400;color:#f4f8fc;transform:scaleX(1.0500);">използва се в превозни средства</div><div class="t" style="left:794.5px;top:150.63px;font-size:9.3px;line-height:9.3px;font-weight:400;color:#f4f8fc;transform:scaleX(1.0233);">сервизна информация</div><div class="t" style="left:949px;top:148.53px;font-size:10px;line-height:10px;font-weight:700;color:#12345e;transform:scaleX(1.0023);">снимка</div><div class="t" style="left:178.5px;top:174.38px;font-size:9px;line-height:9px;font-weight:400;color:#111;">1</div><div class="t" style="left:191.5px;top:174.38px;font-size:9px;line-height:9px;font-weight:400;color:#111;">/</div><div class="t" style="left:203.5px;top:174.38px;font-size:9px;line-height:9px;font-weight:400;color:#111;">2</div><div class="t" style="left:3.5px;top:532.85px;font-size:8.8px;line-height:8.8px;font-weight:400;color:#111;transform:scaleX(0.9326);">потребителски профил: стандартен профил | раздел: избор на ПС | BMW 5 (F10, F18) 530 d</div><div class="a" style="left:4px;top:73px;width:57px;height:140px;overflow:hidden"><div class="t" style="left:3px;top:2.96px;font-size:9.5px;line-height:9.5px;font-weight:400;color:#3a4656;transform:scaleX(0.8708);">страна</div></div><div class="a" style="left:4px;top:73px;width:57px;height:140px;overflow:hidden"><div class="t" style="left:3px;top:16.96px;font-size:9.5px;line-height:9.5px;font-weight:400;color:#3a4656;transform:scaleX(0.8640);">раздел</div></div><div class="a" style="left:4px;top:73px;width:57px;height:140px;overflow:hidden"><div class="t" style="left:3px;top:30.46px;font-size:9.5px;line-height:9.5px;font-weight:400;color:#22335a;transform:scaleX(0.8700);text-decoration:underline">превозно средство</div></div><div class="a" style="left:4px;top:73px;width:57px;height:140px;overflow:hidden"><div class="t" style="left:3px;top:119.46px;font-size:9.5px;line-height:9.5px;font-weight:400;color:#3a4656;transform:scaleX(0.8700);">кодове на двигател</div></div><div class="a" style="left:4px;top:73px;width:57px;height:140px;overflow:hidden"><div class="t" style="left:3px;top:132.46px;font-size:9.5px;line-height:9.5px;font-weight:400;color:#3a4656;transform:scaleX(0.8700);">конструктивни</div></div><div class="a" style="left:62px;top:73px;width:73px;height:140px;overflow:hidden"><div class="t" style="left:3.5px;top:2.96px;font-size:9.5px;line-height:9.5px;font-weight:400;color:#f0f4f8;transform:scaleX(0.8429);">България</div></div><div class="a" style="left:62px;top:73px;width:73px;height:140px;overflow:hidden"><div class="t" style="left:3.5px;top:16.96px;font-size:9.5px;line-height:9.5px;font-weight:400;color:#f0f4f8;transform:scaleX(0.8500);">избор на ПС</div></div><div class="a" style="left:62px;top:73px;width:73px;height:140px;overflow:hidden"><div class="t" style="left:3.5px;top:29.96px;font-size:9.5px;line-height:9.5px;font-weight:400;color:#f0f4f8;transform:scaleX(0.7968);">BMW</div></div><div class="a" style="left:62px;top:73px;width:73px;height:140px;overflow:hidden"><div class="t" style="left:3.5px;top:42.96px;font-size:9.5px;line-height:9.5px;font-weight:400;color:#f0f4f8;transform:scaleX(0.8607);">6 (F10, F18)</div></div><div class="a" style="left:62px;top:73px;width:73px;height:140px;overflow:hidden"><div class="t" style="left:3.5px;top:55.76px;font-size:9.5px;line-height:9.5px;font-weight:400;color:#f0f4f8;transform:scaleX(0.8500);">530 d</div></div><div class="a" style="left:62px;top:73px;width:73px;height:140px;overflow:hidden"><div class="t" style="left:3.5px;top:67.96px;font-size:9.5px;line-height:9.5px;font-weight:400;color:#f0f4f8;transform:scaleX(0.8500);">09.11</div></div><div class="a" style="left:62px;top:73px;width:73px;height:140px;overflow:hidden"><div class="t" style="left:3.5px;top:80.96px;font-size:9.5px;line-height:9.5px;font-weight:400;color:#f0f4f8;transform:scaleX(0.8500);">190 KB</div></div><div class="a" style="left:62px;top:73px;width:73px;height:140px;overflow:hidden"><div class="t" style="left:3.5px;top:93.96px;font-size:9.5px;line-height:9.5px;font-weight:400;color:#f0f4f8;transform:scaleX(0.8500);">2993 Ccm</div></div><div class="a" style="left:62px;top:73px;width:73px;height:140px;overflow:hidden"><div class="t" style="left:3.5px;top:105.96px;font-size:9.5px;line-height:9.5px;font-weight:400;color:#f0f4f8;transform:scaleX(0.8500);">...</div></div><div class="a" style="left:62px;top:73px;width:73px;height:140px;overflow:hidden"><div class="t" style="left:3.5px;top:119.46px;font-size:9.5px;line-height:9.5px;font-weight:400;color:#f0f4f8;transform:scaleX(0.8500);">N57 D30 A</div></div><div class="a" style="left:62px;top:73px;width:73px;height:140px;overflow:hidden"><div class="t" style="left:3.5px;top:132.46px;font-size:9.5px;line-height:9.5px;font-weight:400;color:#f0f4f8;transform:scaleX(0.8500);">шарнири</div></div><div class="t" style="left:4.5px;top:216.53px;font-size:10px;line-height:10px;font-weight:700;color:#fff;transform:scaleX(1.0199);">ПС-/Прототип- /Двигател-/Ос</div><div class="t" style="left:4.5px;top:228.03px;font-size:10px;line-height:10px;font-weight:700;color:#fff;transform:scaleX(0.9831);">история</div><div class="t" style="left:22px;top:270.36px;font-size:9.5px;line-height:9.5px;font-weight:400;color:#dfe8f2;transform:scaleX(0.9469);text-decoration:underline">BMW 5 (F10, F18) 530 d</div><div class="t" style="left:4px;top:375.54px;font-size:10px;line-height:10px;font-weight:700;color:#fff;transform:scaleX(0.9805);">кошница</div><div class="t" style="left:3px;top:391.96px;font-size:9.5px;line-height:9.5px;font-weight:400;color:#333;transform:scaleX(0.8930);clip-path:inset(0 0 0 0)">оличеств</div><div class="t" style="left:41px;top:391.96px;font-size:9.5px;line-height:9.5px;font-weight:400;color:#333;transform:scaleX(0.9891);">артикул</div>
</body></html>
